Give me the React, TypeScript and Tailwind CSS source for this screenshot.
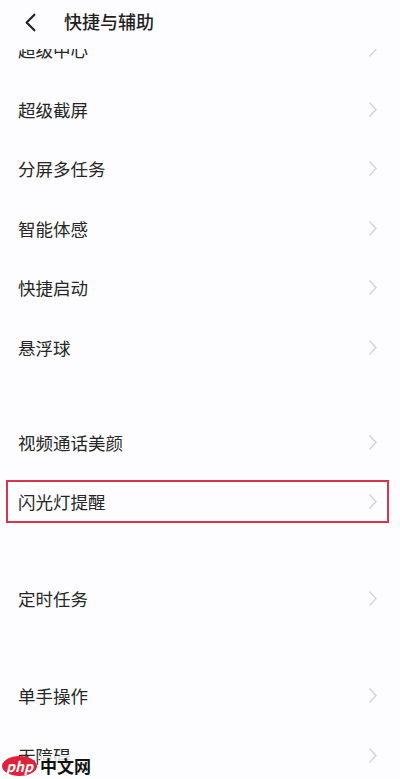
import { ChevronLeft } from "lucide-react";

const font = { fontFamily: '"Noto Sans CJK SC", "Noto Sans", sans-serif' };

type Row = { label: string; highlight?: boolean };

const groups: { top: string; rows: Row[] }[] = [
  {
    top: "mt-0",
    rows: [
      { label: "超级中心" },
      { label: "超级截屏" },
      { label: "分屏多任务" },
      { label: "智能体感" },
      { label: "快捷启动" },
      { label: "悬浮球" },
    ],
  },
  { top: "mt-[35.5px]", rows: [{ label: "视频通话美颜" }, { label: "闪光灯提醒", highlight: true }] },
  { top: "mt-[37.5px]", rows: [{ label: "定时任务" }] },
  { top: "mt-[37.5px]", rows: [{ label: "单手操作" }, { label: "无障碍" }] },
];

function Arrow() {
  return (
    <svg width="10" height="17" viewBox="0 0 10 17" className="shrink-0">
      <path d="M1.5 1.5 L8 8.5 L1.5 15.5" fill="none" stroke="#d4d4d8" strokeWidth="1.4" />
    </svg>
  );
}

function Label({ text }: { text: string }) {
  return <span className="text-[17.5px] leading-none text-[#262626]">{text}</span>;
}

function SettingRow({ row }: { row: Row }) {
  if (row.highlight) {
    // red frame drawn inside the normal row height
    return (
      <div className="h-[59.5px] pl-[6px] pr-[11px] pt-[8px]">
        <div className="flex h-[43px] items-center justify-between border-2 border-[#d8344c] pl-[10px] pr-[9px]">
          <Label text={row.label} />
          <Arrow />
        </div>
      </div>
    );
  }
  return (
    <div className="flex h-[59.5px] items-center justify-between pl-[18px] pr-[22px]">
      <Label text={row.label} />
      <Arrow />
    </div>
  );
}

export default function App() {
  return (
    <div className="relative h-[779px] w-[400px] overflow-hidden bg-[#fdfdff]" style={font}>
      <div className="absolute inset-x-0 top-0 z-10 flex h-[49px] items-start bg-[#fdfdff] pt-[7px]">
        <ChevronLeft className="ml-[15px] text-[#222]" size={31} strokeWidth={1.7} />
        <span className="ml-[18px] mt-[1px] text-[18px] font-medium text-[#1f1f1f]">快捷与辅助</span>
      </div>

      <div className="flex flex-col pt-[20px]">
        {groups.map((g, i) => (
          <div key={i} className={`flex flex-col ${g.top}`}>
            {g.rows.map((r) => (
              <SettingRow key={r.label} row={r} />
            ))}
          </div>
        ))}
      </div>

      <div className="absolute bottom-[3px] left-[2px] z-20 flex items-center gap-[3px]">
        <span className="rounded-[50%] bg-[#e0213a] px-[4px] text-[14px] font-bold italic leading-[20px] text-white">
          php
        </span>
        <span className="bg-white/80 text-[17px] font-bold leading-[20px] text-[#111]">中文网</span>
      </div>
    </div>
  );
}
